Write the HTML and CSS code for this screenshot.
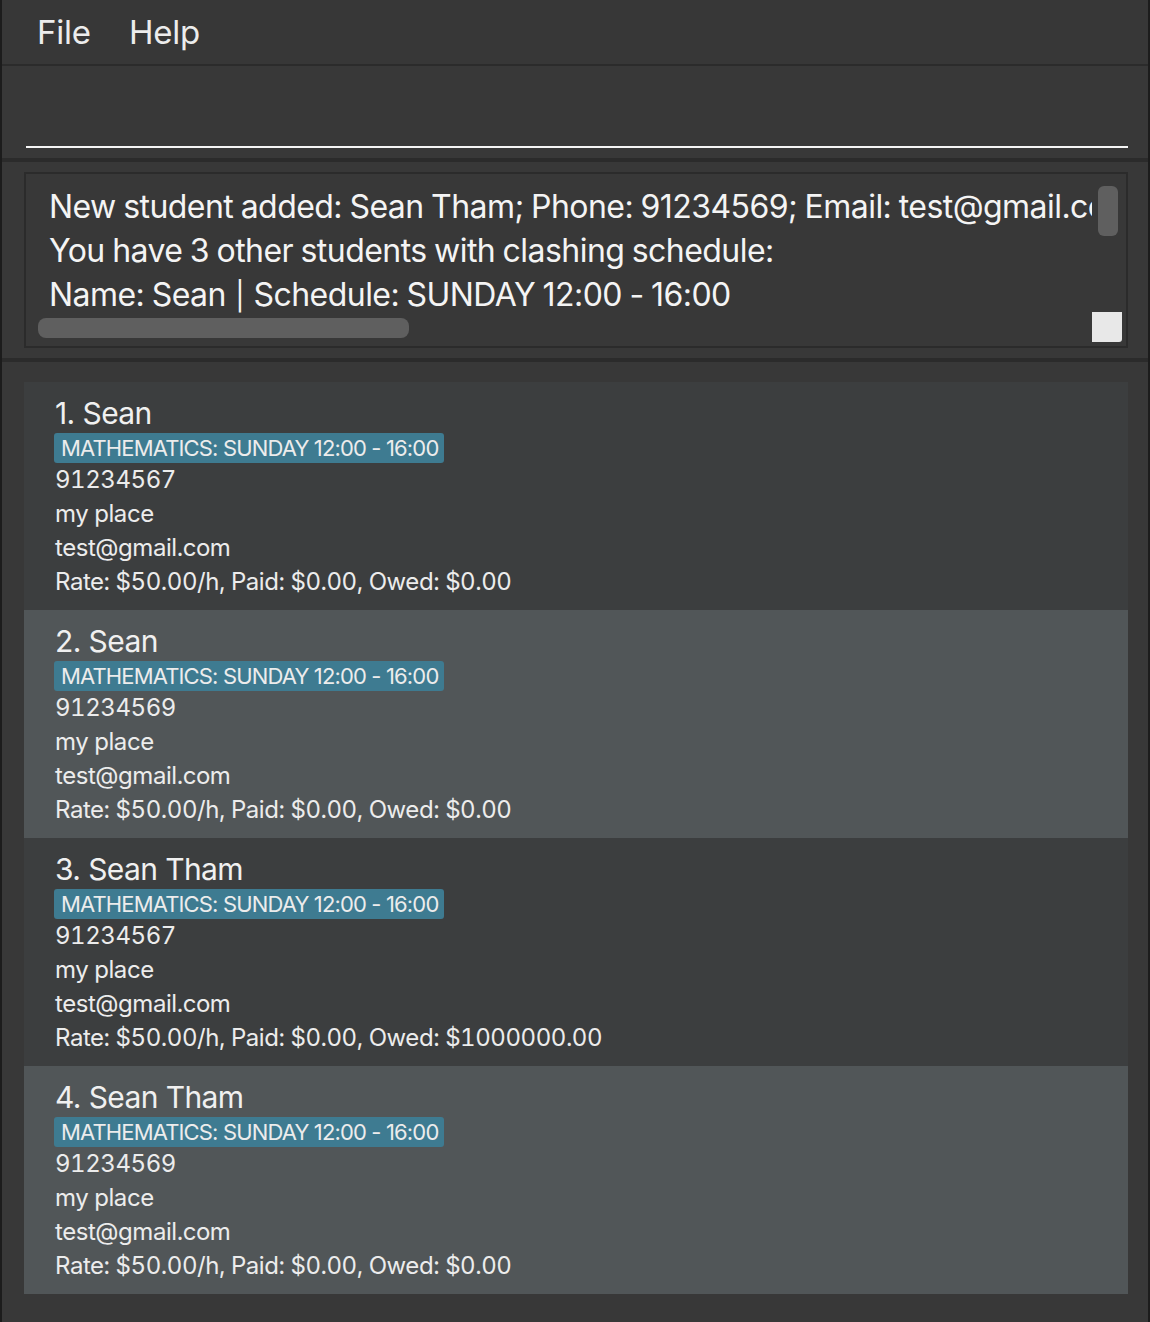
FILE: index.html
```html
<!DOCTYPE html>
<html>
<head>
<meta charset="utf-8">
<link rel="stylesheet" href="styles.css">
</head>
<body>
<div class="app">
  <div class="menubar">
    <span class="menu-item">File</span>
    <span class="menu-item">Help</span>
  </div>
  <div class="command">
    <div class="command-input"></div>
  </div>
  <div class="result">
    <div class="result-box">
      <div class="result-text">
        <div class="result-line">New student added: Sean Tham; Phone: 91234569; Email: test@gmail.com; Address: my place</div>
        <div class="result-line">You have 3 other students with clashing schedule:</div>
        <div class="result-line">Name: Sean <span class="bar">|</span> Schedule: SUNDAY 12:00 - 16:00</div>
      </div>
      <div class="vscroll"></div>
      <div class="hscroll"></div>
      <div class="corner"></div>
    </div>
  </div>
  <div class="list">
    <div class="card odd">
      <div class="name">1. Sean</div>
      <div class="tags"><span class="tag">MATHEMATICS: SUNDAY 12:00 - 16:00</span></div>
      <div class="field">91234567</div>
      <div class="field">my place</div>
      <div class="field">test@gmail.com</div>
      <div class="field">Rate: $50.00/h, Paid: $0.00, Owed: $0.00</div>
    </div>
    <div class="card even">
      <div class="name">2. Sean</div>
      <div class="tags"><span class="tag">MATHEMATICS: SUNDAY 12:00 - 16:00</span></div>
      <div class="field">91234569</div>
      <div class="field">my place</div>
      <div class="field">test@gmail.com</div>
      <div class="field">Rate: $50.00/h, Paid: $0.00, Owed: $0.00</div>
    </div>
    <div class="card odd">
      <div class="name">3. Sean Tham</div>
      <div class="tags"><span class="tag">MATHEMATICS: SUNDAY 12:00 - 16:00</span></div>
      <div class="field">91234567</div>
      <div class="field">my place</div>
      <div class="field">test@gmail.com</div>
      <div class="field">Rate: $50.00/h, Paid: $0.00, Owed: $1000000.00</div>
    </div>
    <div class="card even">
      <div class="name">4. Sean Tham</div>
      <div class="tags"><span class="tag">MATHEMATICS: SUNDAY 12:00 - 16:00</span></div>
      <div class="field">91234569</div>
      <div class="field">my place</div>
      <div class="field">test@gmail.com</div>
      <div class="field">Rate: $50.00/h, Paid: $0.00, Owed: $0.00</div>
    </div>
  </div>
</div>
</body>
</html>
```

FILE: styles.css
```css
html, body {
  margin: 0;
  padding: 0;
  height: 100%;
}
body {
  background: #383838;
  font-family: Inter, "Noto Sans", sans-serif;
  color: #ececec;
}
.app {
  height: 1322px;
  border-left: 2px solid #1c1c1c;
  border-right: 2px solid #1c1c1c;
  box-sizing: border-box;
  overflow: hidden;
}
.menubar {
  height: 64px;
  border-bottom: 2px solid #2b2b2b;
  display: flex;
  align-items: center;
  gap: 38px;
  padding-left: 35px;
  background: #373737;
}
.menu-item {
  font-size: 33px;
  letter-spacing: -0.2px;
  color: #ececec;
}
.command {
  height: 92px;
  padding: 0 20px 0 24px;
  border-bottom: 4px solid #2b2b2b;
  display: flex;
  align-items: flex-end;
}
.command-input {
  flex: 1;
  height: 80px;
  border-bottom: 2px solid #f5f5f5;
  margin-bottom: 10px;
}
.result {
  height: 200px;
  padding: 10px 20px 10px 22px;
  box-sizing: border-box;
  border-bottom: 4px solid #2b2b2b;
}
.result-box {
  position: relative;
  height: 176px;
  border: 2px solid #2b2b2b;
  box-sizing: border-box;
  overflow: hidden;
}
.result-text {
  padding: 11px 0 0 23px;
  white-space: nowrap;
  font-size: 32px;
  line-height: 44px;
  color: #f4f4f4;
  letter-spacing: -0.55px;
  word-spacing: -1px;
  width: 1043px;
  overflow: hidden;
}
.bar {
  display: inline-block;
  font-size: 28px;
  margin: 0 2px;
}
.vscroll {
  position: absolute;
  left: 1072px;
  top: 12px;
  width: 20px;
  height: 50px;
  border-radius: 6px;
  background: #5f5f5f;
}
.hscroll {
  position: absolute;
  left: 12px;
  top: 144px;
  width: 371px;
  height: 20px;
  border-radius: 8px;
  background: #5f5f5f;
}
.corner {
  position: absolute;
  left: 1066px;
  top: 138px;
  width: 30px;
  height: 30px;
  border-radius: 0 0 3px 0;
  background: #e8e8e8;
}
.list {
  padding: 20px 20px 0 22px;
}
.card {
  height: 228px;
  box-sizing: border-box;
  padding: 11px 0 11px 31px;
}
.card.odd { background: #3c3e3f; }
.card.even { background: #515658; }
.name {
  font-size: 30px;
  line-height: 40px;
  color: #f0f0f0;
  letter-spacing: -0.6px;
}
.tags {
  height: 30px;
  display: flex;
  margin-left: -1px;
}
.tag {
  background: #3e7b91;
  border-radius: 3px;
  padding: 0 6px 0 7px;
  font-size: 22px;
  line-height: 30px;
  color: #ececec;
  letter-spacing: -0.85px;
}
.field {
  font-size: 24px;
  line-height: 34px;
  color: #ececec;
  letter-spacing: -0.45px;
  font-variant-numeric: tabular-nums;
}
```
